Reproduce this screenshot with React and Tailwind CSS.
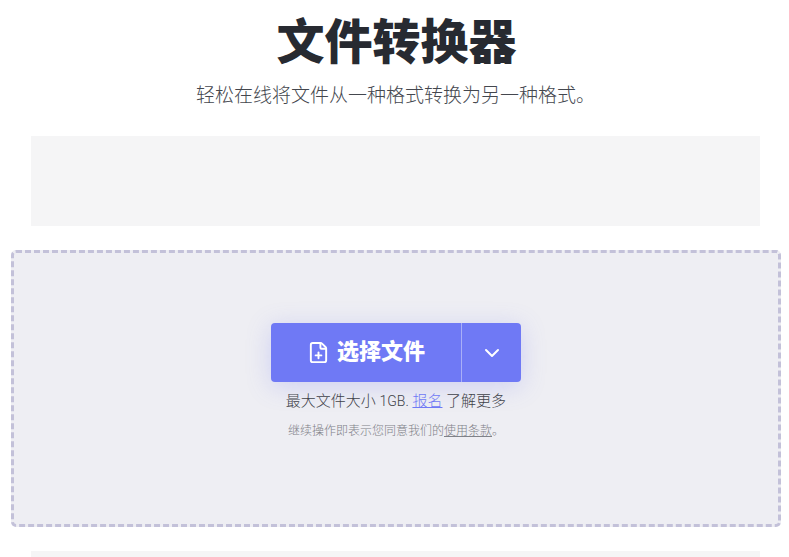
import { ChevronDown, FilePlus } from "lucide-react";

const cjk = "font-['Roboto','Noto_Sans_CJK_SC','Noto_Sans',sans-serif]";

export default function App() {
  return (
    <div className={`h-[557px] w-[789px] overflow-hidden bg-white ${cjk}`}>
      <header className="flex flex-col items-center pl-[2px]">
        <h1 className="mt-[11px] ml-[2px] h-[64px] text-[48px] leading-[64px] font-black text-[#272a31]">文件转换器</h1>
        <p className="mt-[7px] h-[28px] text-[19px] leading-[28px] font-light text-[#44474e]">轻松在线将文件从一种格式转换为另一种格式。</p>
      </header>
      <div className="mt-[26px] ml-[31px] h-[90px] w-[729px] bg-[#f5f5f6]" />
      <section className="mx-[11px] mt-[24px] flex h-[277px] w-[770px] flex-col items-center rounded-[5px] border-[3px] border-dashed border-[#c3c1d9] bg-[#eeeef3] pt-[70px]">
        <div className="flex h-[59px] w-[250px] rounded-[4px] bg-[#6f79f5] text-white shadow-[0_4px_24px_rgba(111,121,245,0.25)]">
          <button className="flex w-[191px] items-center justify-center gap-[7px] border-r border-[#a9aff8] pb-[3px] text-[22px] font-black">
            <FilePlus size={23} strokeWidth={2} className="mt-[3px]" />
            选择文件
          </button>
          <button className="flex flex-1 items-center justify-center">
            <ChevronDown size={24} strokeWidth={2} />
          </button>
        </div>
        <p className="mt-[8px] h-[22px] text-[15px] leading-[22px] font-light text-[#3f424a]">
          最大文件大小 <span className="text-[14px]">1GB.</span> <a className="text-[#6f79f5] underline">报名</a> 了解更多
        </p>
        <p className="mt-[10px] h-[18px] text-[12px] leading-[18px] font-light text-[#7f8188]">
          继续操作即表示您同意我们的<a className="underline">使用条款</a>。
        </p>
      </section>
      <div className="mt-[24px] ml-[31px] h-[20px] w-[729px] bg-[#f5f5f6]" />
    </div>
  );
}
